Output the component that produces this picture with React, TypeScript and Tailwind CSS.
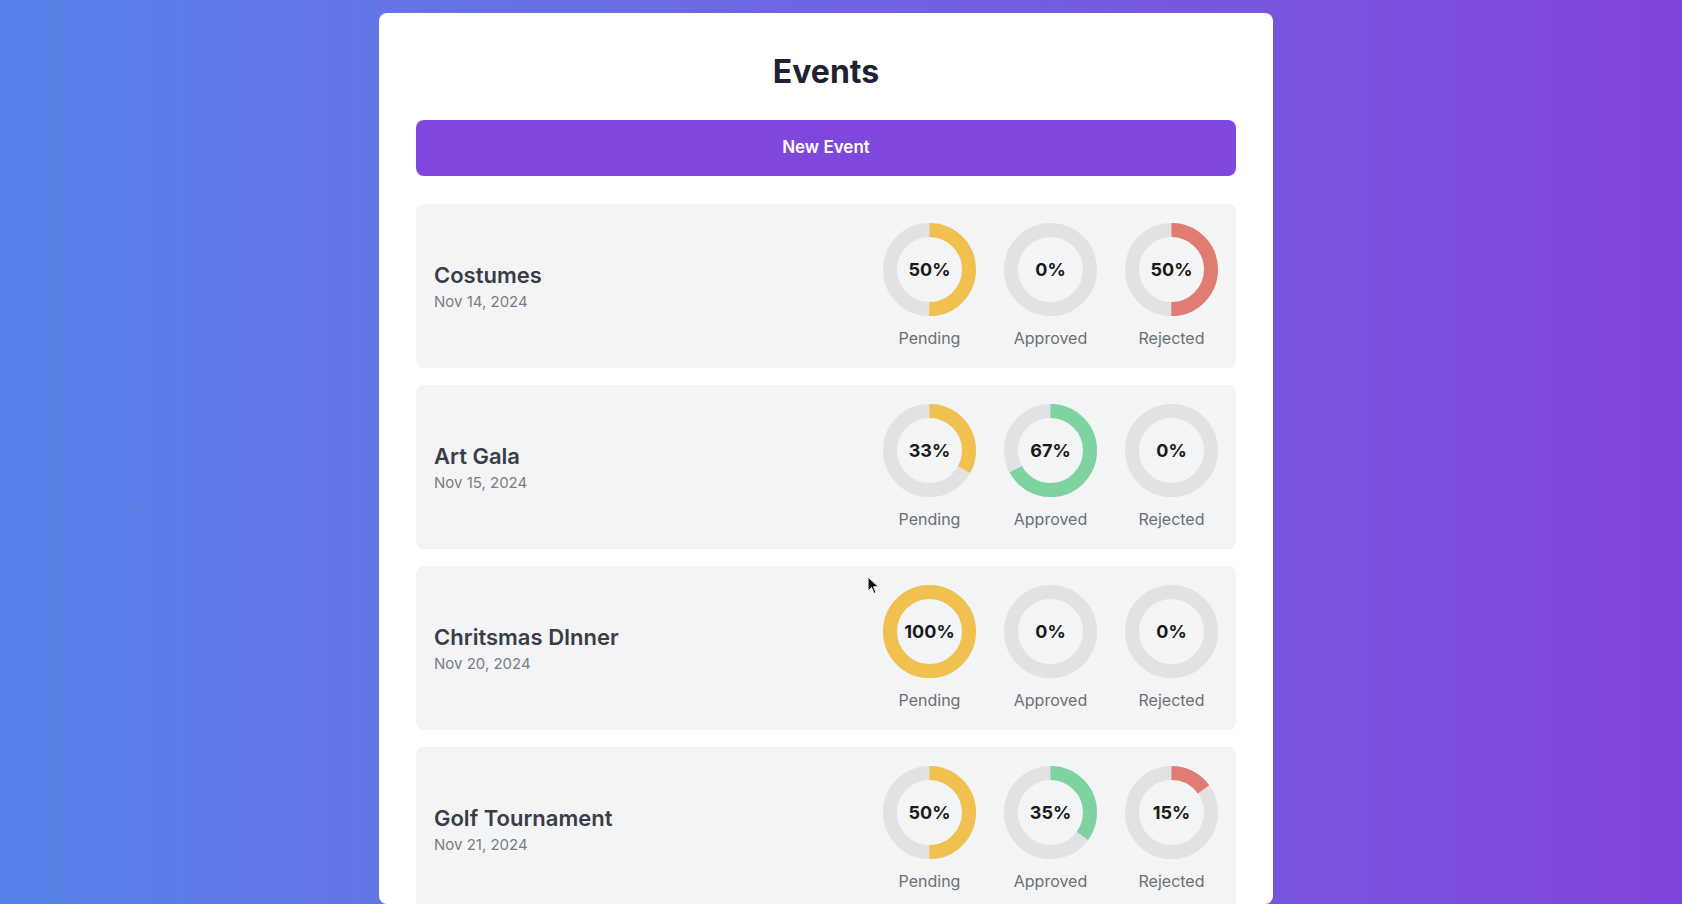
const events = [
  { name: "Costumes", date: "Nov 14, 2024", pending: 50, approved: 0, rejected: 50 },
  { name: "Art Gala", date: "Nov 15, 2024", pending: 33, approved: 67, rejected: 0 },
  { name: "Chritsmas DInner", date: "Nov 20, 2024", pending: 100, approved: 0, rejected: 0 },
  { name: "Golf Tournament", date: "Nov 21, 2024", pending: 50, approved: 35, rejected: 15 },
];

const Donut = ({ value, color }: { value: number; color: string }) => {
  const r = 39.5;
  const c = 2 * Math.PI * r;
  return (
    <div className="relative w-[93px] h-[93px]">
      <svg width="93" height="93" viewBox="0 0 93 93" className="-rotate-90">
        <circle cx="46.5" cy="46.5" r={r} fill="none" stroke="#e2e2e4" strokeWidth="14" />
        {value > 0 && (
          <circle
            cx="46.5"
            cy="46.5"
            r={r}
            fill="none"
            stroke={color}
            strokeWidth="14"
            strokeDasharray={`${(c * value) / 100} ${c}`}
          />
        )}
      </svg>
      <div className="absolute inset-0 flex items-center justify-center text-[18px] font-bold text-[#1a1a1a]">
        {value}%
      </div>
    </div>
  );
};

const Stat = ({ value, color, label }: { value: number; color: string; label: string }) => {
  return (
    <div className="flex flex-col items-center gap-[10px]">
      <Donut value={value} color={color} />
      <span className="text-[16px] leading-6 text-[#6b6f78]">{label}</span>
    </div>
  );
};

const App = () => {
  return (
    <div
      className="h-screen overflow-hidden bg-linear-to-r from-[#5582e8] to-[#7f43d9] flex justify-center pr-[30px]"
      style={{ fontFamily: "Inter, 'Noto Sans', sans-serif" }}
    >
      <div className="relative mt-[13px] w-[894px] bg-white rounded-lg px-[37px] pt-[39px]">
        <h1 className="text-center text-[32px] leading-10 font-bold text-[#1f2230]">Events</h1>
        <button className="mt-[28px] w-full h-[56px] rounded-lg bg-[#7f47dd] text-white text-[17px] font-semibold">
          New Event
        </button>
        <div className="mt-[28px] flex flex-col gap-[17px]">
          {events.map((e) => (
            <div
              key={e.name}
              className="flex items-center justify-between bg-[#f3f4f6] rounded-lg px-[18px] pt-[19px] pb-[18px]"
            >
              <div className="flex flex-col gap-[3px]">
                <span className="text-[22px] leading-7 font-semibold text-[#3a3d47]">{e.name}</span>
                <span className="text-[15px] leading-5 text-[#7a7d85]">{e.date}</span>
              </div>
              <div className="flex gap-[28px]">
                <Stat value={e.pending} color="#f0c14f" label="Pending" />
                <Stat value={e.approved} color="#7fd3a1" label="Approved" />
                <Stat value={e.rejected} color="#e07c72" label="Rejected" />
              </div>
            </div>
          ))}
        </div>
        <svg
          className="absolute left-[488px] top-[563px]"
          width="13"
          height="19"
          viewBox="0 0 13 19"
        >
          <path d="M1 1 L1 15 L4.5 11.5 L7 17.5 L9 16.6 L6.6 10.8 L11.5 10.8 Z" fill="#111" stroke="#fff" strokeWidth="1" />
        </svg>
      </div>
    </div>
  );
};

export default App;
